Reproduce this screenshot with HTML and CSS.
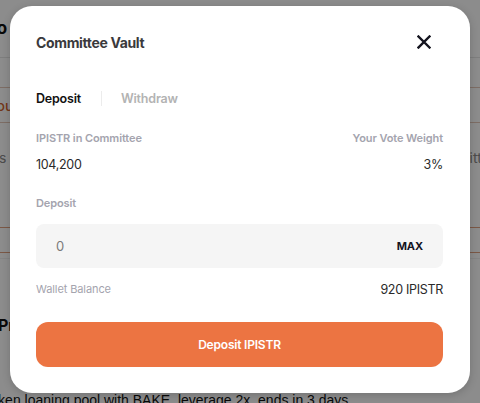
FILE: index.html
```html
<!DOCTYPE html>
<html>
<head>
<meta charset="utf-8">
<link rel="stylesheet" href="styles.css">
</head>
<body>
<div class="page">
  <div class="pg-head"><span class="pg-title">Info</span></div>
  <div class="pg-tabs"><span class="pg-tab">You</span></div>
  <div class="pg-stats"><span class="pg-s">s</span><span class="pg-r">Committee</span></div>
  <div class="pg-band"></div>
  <div class="pg-card"><span class="pg-pr">Proposals</span></div>
  <div class="pg-desc">Baken loaning pool with BAKE, leverage 2x, ends in 3 days</div>
</div>

<div class="overlay">
  <div class="modal">
    <div class="m-head">
      <h2 class="m-title">Committee Vault</h2>
      <button class="m-close" aria-label="Close">
        <svg width="14" height="14" viewBox="0 0 14 14"><path d="M1.5 1.5 L12.5 12.5 M12.5 1.5 L1.5 12.5" stroke="#14141f" stroke-width="2.4" stroke-linecap="square" fill="none"/></svg>
      </button>
    </div>
    <div class="m-tabs">
      <span class="tab active">Deposit</span>
      <span class="tab-sep"></span>
      <span class="tab">Withdraw</span>
    </div>
    <div class="row labels">
      <span>IPISTR in Committee</span>
      <span>Your Vote Weight</span>
    </div>
    <div class="row values">
      <span>104,200</span>
      <span>3%</span>
    </div>
    <div class="field-label">Deposit</div>
    <div class="input">
      <span class="input-val">0</span>
      <span class="max">MAX</span>
    </div>
    <div class="row wallet">
      <span class="wl">Wallet Balance</span>
      <span class="wv">920 IPISTR</span>
    </div>
    <button class="cta">Deposit IPISTR</button>
  </div>
</div>
</body>
</html>
```

FILE: styles.css
```css
* { box-sizing: border-box; }
html, body { margin: 0; padding: 0; }
body {
  width: 480px;
  height: 403px;
  overflow: hidden;
  background: #ffffff;
  font-family: Inter, "Liberation Sans", sans-serif;
  position: relative;
}

/* background page */
.page { width: 480px; }
.pg-head {
  height: 58px;
  border-bottom: 1px solid #e6e6e6;
  display: flex;
  align-items: center;
}
.pg-title {
  margin-left: -25px;
  font-weight: 700;
  font-size: 17px;
  color: #111;
  padding-bottom: 2px;
}
.pg-tabs {
  margin-top: 29px;
  height: 36px;
  border-top: 1px solid #e4c7b8;
  border-bottom: 1px solid #e4c7b8;
  display: flex;
  align-items: center;
}
.pg-tab { margin-left: -12px; color: #d2642c; font-size: 14px; font-weight: 500; }
.pg-stats {
  height: 74px;
  display: flex;
  align-items: center;
  justify-content: space-between;
  color: #8a8a8a;
  font-size: 14px;
  padding-bottom: 5px;
}
.pg-s { margin-left: -1px; }
.pg-r { margin-right: -18px; }
.pg-band {
  height: 26px;
  border-top: 1px solid #e0a080;
  border-bottom: 1px solid #e0a080;
  margin-top: 30px;
}
.pg-card {
  margin-top: 5px;
  height: 130px;
  border-top: 1px solid #f0f0f0;
  display: flex;
  align-items: center;
}
.pg-pr { margin-left: -2px; font-weight: 700; font-size: 16px; color: #111; padding-top: 2px; }
.pg-desc {
  margin-top: 4px;
  margin-left: -19px;
  white-space: nowrap;
  font-family: "Liberation Sans", sans-serif;
  font-size: 14px;
  color: #111;
}

/* overlay + modal */
.overlay {
  position: absolute;
  inset: 0;
  background: rgba(0, 0, 0, 0.45);
  display: flex;
  justify-content: center;
  align-items: flex-start;
  padding-top: 6px;
}
.modal {
  width: 460px;
  height: 387px;
  background: #ffffff;
  border-radius: 22px;
  box-shadow: 0 2px 8px rgba(0, 0, 0, 0.18);
  padding: 0 27px 0 26px;
  display: flex;
  flex-direction: column;
}
.m-head {
  height: 72px;
  display: flex;
  align-items: center;
  justify-content: space-between;
}
.m-title {
  margin: 0;
  font-size: 14px;
  font-weight: 700;
  letter-spacing: -0.35px;
  color: #3a3a3c;
}
.m-close {
  border: 0;
  background: none;
  padding: 0;
  width: 14px;
  height: 14px;
  margin-right: 12px;
  display: flex;
}
.m-tabs {
  height: 40px;
  display: flex;
  align-items: center;
  font-size: 12.5px;
  font-weight: 600;
  letter-spacing: -0.2px;
}
.tab { color: #b3b3b3; }
.tab.active { color: #111111; }
.tab-sep {
  width: 1px;
  height: 15px;
  background: #ececec;
  margin: 0 19px 0 20px;
}
.row {
  display: flex;
  justify-content: space-between;
  align-items: center;
  height: 16px;
}
.labels {
  margin-top: 12px;
  font-size: 11px;
  font-weight: 600;
  color: #a4a4ae;
  letter-spacing: -0.1px;
}
.values {
  margin-top: 10px;
  font-size: 12.5px;
  color: #2a2a2a;
  letter-spacing: -0.3px;
}
.field-label {
  margin-top: 23px;
  height: 16px;
  line-height: 16px;
  font-size: 11px;
  font-weight: 600;
  color: #a4a4ae;
  letter-spacing: -0.1px;
}
.input {
  margin-top: 13px;
  height: 44px;
  background: #f5f5f5;
  border-radius: 8px;
  display: flex;
  align-items: center;
  justify-content: space-between;
  padding: 0 20px 0 20px;
}
.input-val { font-size: 13px; color: #7a7a7a; }
.max { font-size: 11px; font-weight: 700; color: #14141f; letter-spacing: -0.1px; }
.wallet { margin-top: 13px; }
.wl { font-size: 11px; color: #a4a4ae; letter-spacing: -0.1px; }
.wv { font-size: 12.5px; color: #2a2a2a; letter-spacing: -0.3px; }
.cta {
  margin-top: 25px;
  height: 45px;
  border: 0;
  border-radius: 12px;
  background: #ec7442;
  color: #ffffff;
  font-family: inherit;
  font-size: 12px;
  font-weight: 600;
  letter-spacing: -0.2px;
}
```
